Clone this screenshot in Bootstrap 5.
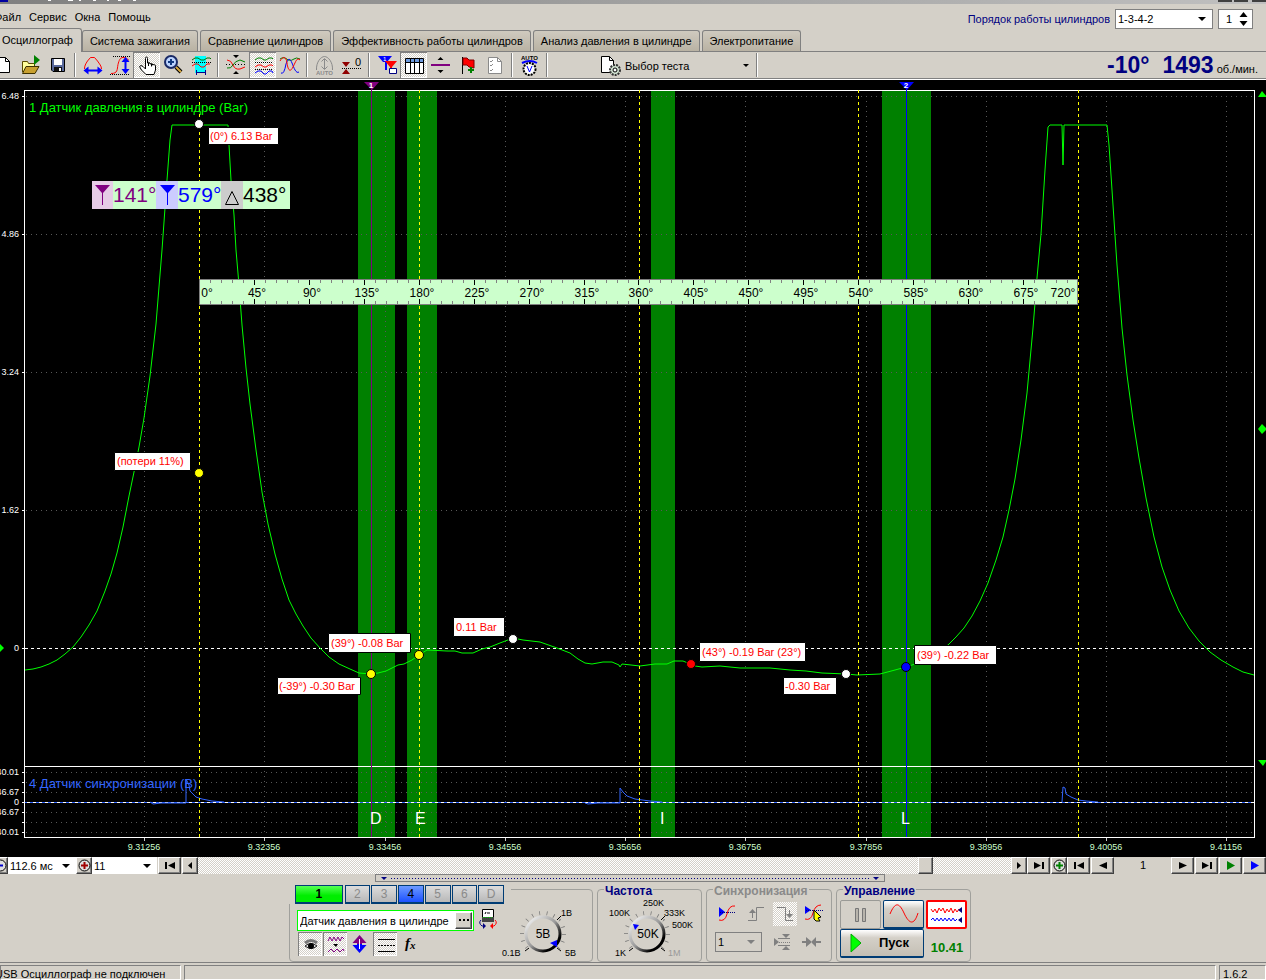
<!DOCTYPE html>
<html lang="ru">
<head>
<meta charset="utf-8">
<meta name="viewport" content="width=device-width, initial-scale=1">
<title>USB Осциллограф</title>
<link rel="stylesheet" href="https://cdn.jsdelivr.net/npm/bootstrap@5.3.0/dist/css/bootstrap.min.css">
<style>
:root{--face:#d4d0c8;--shade:#808080;--navy:#000080;--edge:#003c74}
body{background:var(--face);color:#000;font:11px/16px "Liberation Sans",Arial,sans-serif;min-height:100vh;overflow-x:hidden}
button,input,select{font:inherit;color:#000;border-radius:0}
svg{display:block}
.checker{background:repeating-conic-gradient(#fff 0 25%,var(--face) 0 50%) 0 0/2px 2px}
.titlebar{height:4px;background:linear-gradient(90deg,#808080,#c0c0c0);overflow:hidden}
.menubar{height:25px}
.menubar nav{margin-left:-6px;gap:8px}
.menubar a{color:#000;text-decoration:none}
.order{color:var(--navy);gap:5px;padding:3px 13px 0 0;height:26px}
.pick{position:relative;background:#fff}
.pick::after{content:"";position:absolute;right:6px;top:50%;margin-top:-2px;border:4px solid transparent;border-top-color:#000;border-bottom:0;pointer-events:none}
.pick select,.field{appearance:none;border:0;background:transparent;width:100%;height:100%;padding:0 2px;outline:0}
.boxed{border:1px solid var(--shade);height:20px}
.order .pick{width:98px}
.spin{width:35px;background:#fff}
.spin input{width:20px;padding:0 0 0 7px}
.spin button{border:0;background:none;padding:0;display:block}
.tabs{height:23px;border-bottom:1px solid var(--shade);gap:2px}
.tabs button{height:21px;border:1px solid var(--shade);border-bottom:0;border-radius:3px 3px 0 0;background:linear-gradient(#cfcabf,#b9b2a3);padding:0 7px;white-space:nowrap}
.tabs button.active{height:24px;margin-bottom:-1px;margin-right:-2px;background:var(--face);border-left:0;padding:0 8px 2px 2px;border-radius:0 3px 0 0}
.toolbar{height:28px;border-bottom:1px solid #fff;box-shadow:inset 0 -1px var(--shade)}
.tools{margin-left:-10px}
.tb{width:27px;height:26px;border:0;background:none;padding:0;flex:none}
.tb.on{box-shadow:inset 1px 1px var(--shade),inset -1px -1px #fff}
.tb.on.checker,.mini.checker{background:repeating-conic-gradient(#fff 0 25%,var(--face) 0 50%) 0 0/2px 2px}
.sep{width:2px;height:24px;margin:1px 3px;background:linear-gradient(90deg,var(--shade) 50%,#fff 50%);flex:none}
.testpick{width:156px;margin-left:46px;border:0;background:none;padding:0 4px 0 0}
.caret{border:3px solid transparent;border-top-color:#000;border-bottom:0}
.rpm{color:var(--navy);font-weight:700;font-size:23px;line-height:26px;padding-right:8px}
.rpm span:first-child{margin-right:13px}
.rpm small{font-weight:400;font-size:11px;color:#000;margin-left:3px}
.plot{background:#000;width:100%;height:auto}
.plot text{font-family:"Liberation Sans",Arial,sans-serif}
.strip{height:17px}
.strip .pick{width:68px}
.strip .pick.n{width:65px;margin-right:1px}
.rb{border:1px solid;border-color:#fff #404040 #404040 #fff;box-shadow:inset -1px -1px var(--shade);background:var(--face);padding:0;width:23px;margin-right:1px;flex:none;display:flex;align-items:center;justify-content:center}
.rb.s{width:16px;margin-right:0}
.rb.cut{margin-left:-8px}
.rb.thumb{width:15px;margin-right:78px}
.page{width:56px}
.lower{padding-right:6px}
.grip{width:510px;height:8px;border:1px solid var(--shade);padding:0 5px}
.grip i{border:3px solid transparent;border-top-color:var(--navy);border-bottom:0}
.grip span{height:1px;background:repeating-linear-gradient(90deg,var(--navy) 0 1px,transparent 1px 3px)}
.panels{gap:4px;padding-top:7px;height:80px}
.grp{position:relative;border:1px solid #a0a09c;border-radius:4px;height:73px}
.grp h2{position:absolute;top:-5px;left:6px;margin:0;padding:0 1px;background:var(--face);font-size:12px;font-weight:700;line-height:12px;color:var(--navy)}
.grp h2.dim{color:#8a8a8a}
.g-chan{width:304px}.g-freq{width:105px}.g-sync{width:126px}.g-ctl{width:135px;padding:10px 0 0 3px}
.chan{margin:-5px 0 0 -1px;background:var(--face);padding:0 6px;width:222px}
.chan button{height:19px;width:26px;margin-right:1px;border:1px solid var(--edge);border-width:1px 1px 2px;background:linear-gradient(#dcdcdc,#b8b8b8);color:#8a8a8a;padding:0;line-height:14px;font-size:12px}
.chan .c1{width:48px;margin-right:2px;background:linear-gradient(#5f5,#0e0 60%);color:#000;font-weight:700}
.chan .c4{background:linear-gradient(#6c9aff,#1c50ff);color:#000}
.sensor{width:177px;height:21px;border:1px solid #0f0;background:#fff;margin:6px 4px 0 7px}
.sensor .rb{width:17px;height:17px;margin:1px}
.mini{width:24px;height:24px;border:0;background:none;padding:0;margin-right:1px}
.mini.on{box-shadow:inset 1px 1px var(--shade),inset -1px -1px #fff}
.viewrow{margin-top:1px;padding-left:8px}
.knob{margin-left:-11px}
.src{width:47px;background:transparent}
.src::after{border-top-color:#808080}
.xp{border:1px solid var(--edge);border-width:1px 1px 2px;border-radius:2px;background:linear-gradient(#fff,#d4d0c8 30%,#c4bfb4);padding:0;width:41px;height:29px;flex:none}
.xp.off{border:1px solid #9a9a96;background:var(--face)}
.xp.hot{border:2px solid #f00;background:#fff}
.xp.go{width:84px;font-size:13px;font-weight:700}
.pair{gap:2px}
.val{color:#008000;font-weight:700;font-size:13px;width:50px}
.status{height:18px;border-top:1px solid var(--shade);padding-top:2px;gap:3px;line-height:16px;overflow:hidden}
.status div{border:1px solid;border-color:var(--shade) #fff #fff var(--shade);white-space:nowrap}
.status .a{width:181px;text-indent:-6px}
.status .c{width:47px;padding-left:3px}
</style>
</head>
<body class="d-flex flex-column">
<div class="titlebar"><svg width="100%" height="4" shape-rendering="crispEdges"><rect width="8" height="2" fill="#0000a0"/><path d="M48 0h3M68 0h5M79 0h2M93 0h3M107 0h2M118 0h3M133 0h3" stroke="#fff" stroke-width="2"/><svg x="100%" width="1" height="4" overflow="visible"><path d="M-48 0h14v2h-14zM-32 0h14v2h-14zM-14 0h14v2h-14z" fill="#404040"/></svg></svg></div>

<header class="menubar d-flex justify-content-between">
  <nav class="d-flex align-items-center"><a href="#">Файл</a><a href="#">Сервис</a><a href="#">Окна</a><a href="#">Помощь</a></nav>
  <div class="order d-flex align-items-center">
    <label for="order">Порядок работы цилиндров</label>
    <div class="pick boxed"><select id="order"><option>1-3-4-2</option></select></div>
    <div class="spin boxed d-flex"><input class="field" value="1" aria-label="Цилиндр">
      <div class="d-flex flex-column justify-content-center"><button aria-label="Больше"><svg width="9" height="8"><path d="M4.500 1 8.500 6H.5z"/></svg></button><button aria-label="Меньше"><svg width="9" height="8"><path d="M4.500 7 8.500 2H.5z"/></svg></button></div>
    </div>
  </div>
</header>

<div class="tabs d-flex align-items-end" role="tablist">
  <button class="active" role="tab">Осциллограф</button><button role="tab">Система зажигания</button><button role="tab">Сравнение цилиндров</button><button role="tab">Эффективность работы цилиндров</button><button role="tab">Анализ давления в цилиндре</button><button role="tab">Электропитание</button>
</div>

<div class="toolbar d-flex">
  <div class="tools d-flex">
    <button class="tb" aria-label="Новый"><svg width="27" height="26"><path d="M6.500 5.500h9l4 4v11h-13z" fill="#fff" stroke="#000"/><path d="M15.500 5.500v4h4" fill="none" stroke="#000"/></svg></button>
    <button class="tb" aria-label="Открыть"><svg width="27" height="26"><path d="M5.500 20V9.500h5l1 2h6V14" fill="#ffff9c" stroke="#5a4a00"/><path d="M5.500 21.500 9 14.500h13L18 21.500z" fill="#c8a030" stroke="#3c3000"/><path d="M17 3v10l6-5z" fill="#008000"/></svg></button>
    <button class="tb" aria-label="Сохранить"><svg width="27" height="26"><path d="M7.500 6.500h13v13H9l-1.500-1.500z" fill="#5a6a9c" stroke="#000"/><path d="M10 7h8v6h-8z" fill="#fff"/><path d="M10 15h8v4h-8z" fill="#111"/><path d="M15 16h2v3h-2z" fill="#fff"/></svg></button>
    <span class="sep"></span>
    <button class="tb" aria-label="Период"><svg width="27" height="26"><path d="M5.500 17c0-3 1-5 3-8l3-3.500h4l3 3.500c2 3 4 5 4 8" fill="none" stroke="#f00"/><path d="M8 18.500h12" stroke="#00f" stroke-width="2"/><path d="M4.500 18.500l5-4v8zM23.500 18.500l-5-4v8z" fill="#00f"/></svg></button>
    <button class="tb" aria-label="Амплитуда"><svg width="27" height="26"><path d="M7 4.500h17M4 22.500h20" stroke="#000" stroke-dasharray="1 1" shape-rendering="crispEdges"/><path d="M5 21.500c7 0 6-4 7-9 1-4 2-7 5-7 3 0 4 1 6 3" fill="none" stroke="#f00"/><path d="M19.500 8v12" stroke="#00f" stroke-width="2"/><path d="M19.500 5l-4 5h8zM19.500 22l-4-5h8z" fill="#00f"/></svg></button>
    <button class="tb on checker" aria-label="Рука"><svg width="27" height="26"><path d="M12.500 15V6.500q0-1.500 1-1.500t1 1.500V11l1-.5 1.500.5v1l1.500-.500 1 .5v1l1.500-.5 1.500 1V18l-1.500 4.500h-8L8.500 18l-2-3.500 1.500-1 2 1 2.500 2.500z" fill="#fff" stroke="#000"/><path d="M15.500 11v3M18.500 12v2.500" stroke="#000"/></svg></button>
    <button class="tb" aria-label="Лупа"><svg width="27" height="26"><path d="M16 15l5 5" stroke="#000" stroke-width="4"/><path d="M16 15l5 5" stroke="#d8a840" stroke-width="2"/><circle cx="11" cy="10" r="6" fill="#bcd4ff" stroke="#1a2a66" stroke-width="2"/><path d="M8 10h6M11 7v6" stroke="#123a80" stroke-width="2"/></svg></button>
    <button class="tb" aria-label="Участок"><svg width="27" height="26"><path d="M8 4h11v17H8z" fill="#0ff"/><path d="M5 8l3-2h3l3 2h3l3-2h3l1 1" fill="none" stroke="#007000"/><path d="M5 10.500h19" stroke="#000" stroke-dasharray="1 1" shape-rendering="crispEdges"/><path d="M5 14l3-2h3l3 3h3l3-3h3" fill="none" stroke="#f00"/><path d="M9.500 18v5M18.500 18v5M10 20.500h8" stroke="#00008b"/></svg></button>
    <span class="sep"></span>
    <button class="tb" aria-label="Совместить"><svg width="27" height="26"><path d="M11 3h6l-3 3zM11 22h6l-3-3z"/><path d="M4 12.500h20" stroke="#000" stroke-dasharray="1 2" shape-rendering="crispEdges"/><path d="M5 8q4 0 6 5t7 4l5-2" fill="none" stroke="#f00"/><path d="M5 16q4 1 6-3t7-5l5 2" fill="none" stroke="#008000"/></svg></button>
    <button class="tb on checker" aria-label="Разнести"><svg width="27" height="26"><g fill="none"><path d="M6 8l3-2h3l3 2h2l3-2h3l1 1" stroke="#008000"/><path d="M6 15l3-2h3l3 2h2l3-2h3l1 1" stroke="#f00"/><path d="M6 21l3-2h3l3 3h2l3-3h3l1 2" stroke="#00f"/><path d="M6 10.500h18M6 17.500h18" stroke="#000" stroke-dasharray="1 1" shape-rendering="crispEdges"/></g></svg></button>
    <button class="tb" aria-label="Наложить"><svg width="27" height="26"><g fill="none"><path d="M4 7q4-3 8 1 4 1 6-1t6 0" stroke="#008000"/><path d="M5 21q3 2 5-9c2-6 4-6 6-1s4 11 7 9" stroke="#00f"/><path d="M4 9c3-5 6-5 7 2s3 10 6 4 4-10 7-7" stroke="#f00"/></g></svg></button>
    <span class="sep"></span>
    <button class="tb" aria-label="Авто"><svg width="27" height="26"><path d="M5.500 18C5 10 10 4.500 13.500 4.500S22 10 21.500 18M13.500 7v10M10.500 9.500l3-3 3 3M10.500 14.500l3 3 3-3" fill="none" stroke="#8a8a8a"/><text x="5" y="23" font-size="6" font-weight="700" fill="#8a8a8a">AUTO</text></svg></button>
    <button class="tb" aria-label="Ноль"><svg width="27" height="26"><path d="M4 10h8l-4 5zM4 22h8l-4-5z" fill="#900000"/><path d="M4 16.500h20" stroke="#000" stroke-dasharray="1 1" shape-rendering="crispEdges"/><text x="17" y="14" font-size="11">0</text></svg></button>
    <span class="sep"></span>
    <button class="tb" aria-label="Маркеры"><svg width="27" height="26"><path d="M5 4h14l-5 6v8h-2v-8h-2z" fill="#00f"/><path d="M12 9h12l-5 6v4h-2v-4z" fill="#f00"/><text x="10" y="9" font-size="6" fill="#fff">1</text><path d="M16.500 16.500h7v5h-7z" fill="#fff" stroke="#000080"/></svg></button>
    <button class="tb on checker" aria-label="Таблица"><svg width="27" height="26"><path d="M5.500 6.500h18v15h-18z" fill="#fff" stroke="#000"/><path d="M6 7h17v3H6z" fill="#6d9be0"/><path d="M10.500 7v14M14.500 7v14M19.500 7v14M6 10.500h17" stroke="#000"/></svg></button>
    <button class="tb" aria-label="Разделить"><svg width="27" height="26"><path d="M13.500 5l3 3h-6zM13.500 21l3-3h-6z"/><path d="M4 13h19" stroke="#800080" stroke-width="2"/></svg></button>
    <button class="tb" aria-label="Флаг"><svg width="27" height="26"><path d="M8.500 5v17" stroke="#000"/><path d="M9 6h4l2 2h5v8l-5-1-2-2H9z" fill="#f00" stroke="#800000"/><path d="M17 15v6M14 18h6" stroke="#008000" stroke-width="2"/></svg></button>
    <button class="tb" aria-label="Отчёт"><svg width="27" height="26"><path d="M7.500 5.500h9l4 4v12h-13z" fill="#fff" stroke="#8a8a8a"/><path d="M16.500 5.500v4h4M9 9l1 1 2-2M9 13l1 1 2-2M9 18l1 1 2-2" fill="none" stroke="#8a8a8a"/></svg></button>
    <span class="sep"></span>
    <button class="tb" aria-label="Автонастройка"><svg width="27" height="26"><text x="5" y="8" font-size="6" font-weight="700">AUTO</text><path d="M6 11q8-4 15 0" fill="none" stroke="#00f" stroke-width="2"/><circle cx="13.500" cy="17" r="6" fill="#fff" stroke="#000" stroke-width="2" stroke-dasharray="2 1"/><path d="M11 14l2.500 6 2.500-6" fill="none" stroke="#00f"/></svg></button>
    <span class="sep"></span>
    <button class="testpick d-flex align-items-center"><svg width="24" height="26"><path d="M4.500 3.500h8l4 4v12h-12z" fill="#fff" stroke="#000"/><path d="M12.500 3.500v4h4" fill="none" stroke="#000"/><circle cx="18" cy="17" r="5" fill="#cfe0cf" stroke="#333" stroke-width="2" stroke-dasharray="2 1"/><circle cx="18" cy="17" r="2" fill="#fff" stroke="#000"/></svg><span class="ms-1">Выбор теста</span><i class="caret ms-auto"></i></button>
    <span class="sep"></span>
  </div>
  <div class="rpm ms-auto d-flex align-items-baseline"><span>-10°</span><span>1493</span><small>об./мин.</small></div>
</div>

<svg class="plot" viewBox="0 80 1266 777">
  <g fill="#008000"><path d="M358 91h37v746h-37zM407 91h30v746h-30zM651 91h24v746h-24zM882 91h49v746h-49z"/></g>
  <g id="grid" fill="none" stroke="#585858" shape-rendering="crispEdges"></g>
  <g fill="#fff" shape-rendering="crispEdges"><path d="M24 90h1231v1H24zM24 90h1v748h-1zM1254 90h1v748h-1zM24 837h1231v1H24zM24 766h1231v1H24z"/></g>
  <path d="M25 648.500h1229" stroke="#fff" stroke-dasharray="3 3" shape-rendering="crispEdges"/>
  <polyline fill="none" stroke="#0f0" points="25,670 33,669 41,667 49,664 57,660 65,654 73,647 81,637 89,625 97,611 105,591 111,574 117,553 123,527 129,496 134,472 139,447 144,418 150,376 156,324 162,250 167,180 170,140 172,125 198,125 228,125 229,145 231,180 234,215 236,250 239,285 242,325 246,368 250,404 256,450 262,492 268,524 275,554 282,579 289,600 296,614 303,626 311,638 320,648 329,657 339,664 350,669 359,673 371,674 378,673 386,671 398,665 404,664 412,660 419,655 427,650 447,651 455,651 462,653 473,653 482,649 490,647 500,643 513,638 523,640 540,642 557,648 570,653 578,659 585,663 592,664 603,662 612,662 619,665 620,667 622,664 640,666 655,664 667,664 674,661 683,661 695,666 702,667 720,666 740,668 770,668 790,670 806,671 822,673 846,674 857,675 880,674 895,670 906,667 918,663 930,656 948,645 956,637 964,628 972,616 980,601 988,583 996,560 1003,537 1009,510 1015,479 1021,440 1027,393 1033,328 1037,278 1041,234 1045,170 1048,127 1050,125 1062,125 1063,165 1064,125 1107,125 1109,145 1113,205 1117,265 1122,328 1127,375 1133,420 1139,458 1146,498 1154,537 1162,567 1170,590 1179,611 1189,628 1199,641 1210,652 1221,660 1233,667 1243,672 1254,675"/>
  <path d="M25 802.500h1229" stroke="#36f" shape-rendering="crispEdges"/>
  <path d="M27 802.500h1227" stroke="#fff" stroke-dasharray="3 3" shape-rendering="crispEdges"/>
  <path d="M150 802l3 2 8-1h25v-24l3 6 1 6 3 3 3 3 6 2 10 2 12 1M585 803l3 1 10-1h22v-15l3 4 4 4 8 3 15 2 12 1M1062 802l1-15 2 1 1 6 5 3 7 3 8 1 12 1" fill="none" stroke="#36f"/>
  <g id="events" stroke="#ff0" stroke-dasharray="3 3" shape-rendering="crispEdges"></g>
  <path d="M371 88h1v749h-1z" fill="#800080"/><path d="M906 88h1v749h-1z" fill="#00f"/>
  <path d="M364 82h15l-7 8z" fill="#800080"/><path d="M899 82h15l-7 8z" fill="#00f"/>
  <g fill="#fff" font-size="8" font-weight="700" text-anchor="middle"><text x="371" y="88">1</text><text x="906" y="88">2</text></g>
  <text x="29" y="112" font-size="13" fill="#0f0">1 Датчик давления в цилиндре (Bar)</text>
  <text x="29" y="788" font-size="13" fill="#36f">4 Датчик синхронизации (В)</text>
  <g fill="#fff" font-size="16"><text x="370" y="824">D</text><text x="415" y="824">E</text><text x="660" y="824">I</text><text x="901" y="824">L</text></g>
  <g fill="#fff" font-size="9" text-anchor="end"><text x="19" y="99">6.48</text><text x="19" y="237">4.86</text><text x="19" y="375">3.24</text><text x="19" y="513">1.62</text><text x="19" y="651">0</text><text x="19" y="775">140.01</text><text x="19" y="795">46.67</text><text x="19" y="805">0</text><text x="19" y="815">-46.67</text><text x="19" y="835">-140.01</text></g>
  <g id="times" fill="#cfc" font-size="9" text-anchor="middle"></g>
  <path d="M1258 97l4-6 5 6zM1258 760h9l-4 6zM1262 424l5 5-5 5-4-5zM0 644l4 4-4 4z" fill="#0f0"/>

  <path d="M199.500 279.500h878v25h-878z" fill="#cfc" stroke="#808080"/>
  <g id="ruler" shape-rendering="crispEdges"></g>
  <g id="degrees" font-size="12" text-anchor="middle"></g>

  <path d="M92 181h198v28H92z" fill="#cfc"/><path d="M92 181h21v28H92z" fill="#e6cce6"/><path d="M156 181h22v28h-22z" fill="#ccf"/><path d="M221 181h22v28h-22z" fill="#ccc"/>
  <path d="M95 185h15l-7 8v12h-1v-12z" fill="#800080"/><path d="M160 185h15l-7 8v12h-1v-12z" fill="#00f"/><path d="M232 191.500l6.500 13h-13z" fill="none" stroke="#000"/>
  <g font-size="21"><text x="113" y="202" fill="#800080">141°</text><text x="178" y="202" fill="#00f">579°</text><text x="243" y="202">438°</text></g>

  <path fill="#fff" stroke="#000" d="M208.500 127.500h70v17h-70zM114.500 452.500h76v18h-76zM328.500 633.500h82v19h-82zM277.500 677.500h83v17h-83zM453.500 617.500h51v19h-51zM699.500 642.500h106v19h-106zM783.500 677.500h53v17h-53zM914.500 645.500h82v19h-82z"/>
  <g fill="#f00" font-size="11"><text x="210" y="140">(0°) 6.13 Bar</text><text x="117" y="465">(потери 11%)</text><text x="331" y="647">(39°) -0.08 Bar</text><text x="279" y="690">(-39°) -0.30 Bar</text><text x="456" y="631">0.11 Bar</text><text x="702" y="656">(43°) -0.19 Bar (23°)</text><text x="785" y="690">-0.30 Bar</text><text x="917" y="659">(39°) -0.22 Bar</text></g>
  <g stroke="#000"><g fill="#fff"><circle cx="199" cy="124" r="4.500"/><circle cx="513" cy="639" r="4.500"/><circle cx="846" cy="674" r="4.500"/></g><g fill="#ff0"><circle cx="199" cy="473" r="4.500"/><circle cx="371" cy="674" r="4.500"/><circle cx="419" cy="655" r="4.500"/></g><circle cx="691" cy="664" r="4.500" fill="#f00"/><circle cx="906" cy="667" r="4.500" fill="#00f"/></g>
</svg>

<div class="strip d-flex">
  <button class="rb s cut" aria-label="Уменьшить"><svg width="13" height="13"><circle cx="6.500" cy="6.500" r="5.500" fill="#ddd" stroke="#000"/><path d="M4 6.500h5" stroke="#00c" stroke-width="2"/></svg></button>
  <div class="pick"><select aria-label="Развёртка"><option>112.6 мс</option></select></div>
  <button class="rb s" aria-label="Увеличить"><svg width="13" height="13"><circle cx="6.500" cy="6.500" r="5.500" fill="#ddd" stroke="#000"/><path d="M3 6.500h7M6.500 3v7" stroke="#a00000" stroke-width="2"/></svg></button>
  <div class="pick n"><select aria-label="Масштаб"><option>11</option></select></div>
  <button class="rb" aria-label="В начало"><svg width="12" height="9"><path d="M1 1h2v7H1zM11 1v7L4 4.500z"/></svg></button>
  <button class="rb s" aria-label="Влево"><svg width="6" height="9"><path d="M5 1v7L1 4.500z"/></svg></button>
  <div class="checker flex-grow-1 d-flex justify-content-end"><span class="rb thumb"></span></div>
  <button class="rb s" aria-label="Вправо"><svg width="6" height="9"><path d="M1 1v7l4-3.500z"/></svg></button>
  <button class="rb" aria-label="В конец"><svg width="12" height="9"><path d="M9 1h2v7H9zM1 1v7l7-3.500z"/></svg></button>
  <button class="rb s" aria-label="Добавить"><svg width="13" height="13"><circle cx="6.500" cy="6.500" r="5.500" fill="#ddd" stroke="#000"/><path d="M3 6.500h7M6.500 3v7" stroke="#008000" stroke-width="2"/></svg></button>
  <button class="rb" aria-label="Первый"><svg width="12" height="9"><path d="M1 1h2v7H1zM11 1v7L4 4.500z"/></svg></button>
  <button class="rb" aria-label="Назад"><svg width="10" height="9"><path d="M9 1v7L1 4.500z"/></svg></button>
  <div class="page text-center">1</div>
  <button class="rb" aria-label="Вперёд"><svg width="10" height="9"><path d="M1 1v7l8-3.500z"/></svg></button>
  <button class="rb" aria-label="Последний"><svg width="12" height="9"><path d="M9 1h2v7H9zM1 1v7l7-3.500z"/></svg></button>
  <button class="rb" aria-label="Просмотр"><svg width="10" height="9"><path d="M1 0v9l8-4.500z" fill="#008000"/></svg></button>
  <button class="rb me-0" aria-label="Воспроизвести"><svg width="10" height="9"><path d="M1 0v9l8-4.500z" fill="#00f"/></svg></button>
</div>

<div class="lower">
<div class="grip mx-auto d-flex align-items-center"><i></i><span class="flex-grow-1 mx-1"></span><i></i></div>

<main class="panels d-flex justify-content-center">
  <section class="grp g-chan d-flex">
    <div>
      <div class="chan d-flex"><button class="c1">1</button><button>2</button><button>3</button><button class="c4">4</button><button>5</button><button>6</button><button>D</button></div>
      <div class="d-flex"><div class="sensor d-flex"><input class="field" value="Датчик давления в цилиндре" aria-label="Датчик"><button class="rb" aria-label="Выбрать датчик"><svg width="10" height="3"><path d="M0 0h2v2H0zM4 0h2v2H4zM8 0h2v2H8z"/></svg></button></div>
        <svg width="20" height="22" class="mt-1"><path d="M4.500 1.500h11v10h-11z" fill="#fff" stroke="#000"/><path d="M4 9h12v5H4z" fill="#444"/><path d="M7 6l1-2M9 5h3" stroke="#000"/><path d="M5 9.500h10" stroke="#0c0" stroke-dasharray="1 1"/><path d="M3 12q-3 3 1 6h3" fill="none" stroke="#000080"/><path d="M5 15l3 3-3 3z" fill="#000080"/><path d="M17 12q3 3-1 6h-3" fill="none" stroke="#f00"/><path d="M15 15l-3 3 3 3z" fill="#f00"/></svg></div>
      <div class="viewrow d-flex">
        <button class="mini on checker" aria-label="Видимость"><svg width="24" height="24"><path d="M7 11q6-5 12 0" stroke="#777" stroke-width="3" fill="none"/><path d="M7 14q6-5 12 0-6 5-12 0z" fill="#ddd" stroke="#222"/><circle cx="13" cy="14" r="3"/></svg></button>
        <button class="mini on checker" aria-label="Сглаживание"><svg width="24" height="24"><path d="M5 9l2-4 2 4 2-4 2 4 2-4 2 4 2-4 2 2" fill="none" stroke="#800080"/><path d="M10 12h5l-2 3z"/><path d="M5 20l3-3 3 3 3-3 3 3 3-3 1 2" fill="none" stroke="#800080"/></svg></button>
        <button class="mini" aria-label="Инверсия"><svg width="24" height="24"><path d="M11.500 3l7 8H14v1H9v-1H4.500z" fill="#800080"/><path d="M11.500 21l7-8H14v-1H9v1H4.500z" fill="#00f"/><path d="M11.500 7v10" stroke="#fff"/></svg></button>
        <button class="mini on checker" aria-label="Линии"><svg width="24" height="24"><path d="M5 7.500h17M5 19.500h17" stroke="#000"/><path d="M5 13.500h17" stroke="#000" stroke-dasharray="2 1"/></svg></button>
        <button class="mini" aria-label="Функция"><svg width="24" height="24"><text x="7" y="16" font-family="Liberation Serif" font-size="15" font-style="italic" font-weight="700">f</text><text x="12" y="17" font-family="Liberation Serif" font-size="11" font-style="italic" font-weight="700">x</text></svg></button>
      </div>
    </div>
    <svg class="knob" width="90" height="70" viewBox="500 890 90 70"><use href="#dial" x="543" y="934"/><path d="M550 943l7-3v7z" fill="#00f"/><g font-size="9"><text x="561" y="916">1В</text><text x="502" y="956">0.1В</text><text x="565" y="956">5В</text></g><text x="543" y="938" font-size="12" text-anchor="middle">5В</text></svg>
  </section>

  <section class="grp g-freq"><h2>Частота</h2>
    <svg width="103" height="70" viewBox="598 890 103 70">
      <defs><linearGradient id="rim" x1="0" y1="0" x2="1" y2="1"><stop offset="0" stop-color="#fff"/><stop offset=".5" stop-color="#999"/><stop offset=".8" stop-color="#000"/></linearGradient>
      <g id="dial"><circle r="21" fill="none" stroke="#777" stroke-width="4" pathLength="360" stroke-dasharray="2 18" transform="rotate(140)"/><path d="M0 0-26 28H26z" fill="#d4d0c8"/><circle r="17" fill="#d4d0c8" stroke="url(#rim)" stroke-width="3"/><path d="M-14 14l-4 3M14 14l4 3M14-14l4-4" stroke="#000"/></g></defs>
      <use href="#dial" x="647" y="934"/><path d="M633 924l6 1-4 5z" fill="#00f"/>
      <g font-size="9"><text x="609" y="916">100K</text><text x="643" y="906">250K</text><text x="664" y="916">333K</text><text x="672" y="928">500K</text><text x="615" y="956">1K</text><text x="668" y="956" fill="#999">1M</text></g><text x="648" y="938" font-size="12" text-anchor="middle">50K</text>
    </svg></section>

  <section class="grp g-sync pt-2 ps-2"><h2 class="dim">Синхронизация</h2>
    <div class="d-flex gap-1 pt-1">
      <button class="mini" aria-label="Уровень"><svg width="24" height="24"><path d="M4 5l6 5-6 5z" fill="#00f"/><path d="M5 10.500h16" stroke="#000080" stroke-dasharray="1 1"/><path d="M4 18q6 2 8-6 2-9 8-8" fill="none" stroke="#f00"/></svg></button>
      <button class="mini" aria-label="По фронту"><svg width="24" height="24"><path d="M4 18.500h8.500v-13H20M8.500 16V9" fill="none" stroke="#808080"/><path d="M5 11h7l-3.500-4z" fill="#808080"/></svg></button>
      <button class="mini checker" aria-label="По спаду"><svg width="24" height="24"><path d="M4 5.500h8.500v13H20M16.500 8v6" fill="none" stroke="#808080"/><path d="M13 12h7l-3.500 4z" fill="#808080"/></svg></button>
      <button class="mini" aria-label="Указать"><svg width="24" height="24"><path d="M3 4l6 4-6 4z" fill="#00f"/><path d="M4 8.500h17" stroke="#000080" stroke-dasharray="1 1"/><path d="M3 17q6 2 8-6 2-8 8-8" fill="none" stroke="#f00"/><path d="M12 8l7 7-3 1 2 3h-4l-2-2z" fill="#ff0" stroke="#000"/></svg></button>
    </div>
    <div class="d-flex align-items-center gap-1 mt-1">
      <div class="pick src boxed me-1"><select aria-label="Канал синхронизации"><option>1</option></select></div>
      <button class="mini" aria-label="Зона"><svg width="24" height="24"><path d="M4 8l5 4-5 4zM12 4h8l-4 4zM12 20h8l-4-4z" fill="#808080"/><path d="M8 8.500h12M8 15.500h12" stroke="#808080"/><path d="M9 12.500h11" stroke="#808080" stroke-dasharray="1 1"/></svg></button>
      <button class="mini" aria-label="Центр"><svg width="24" height="24"><path d="M7 7l6 5-6 5v-4H3v-2h4zM17 7l-5 5 5 5v-4h5v-2h-5z" fill="#808080"/></svg></button>
    </div></section>

  <section class="grp g-ctl"><h2>Управление</h2>
    <div class="pair d-flex">
      <button class="xp off" aria-label="Пауза"><svg class="mx-auto" width="14" height="16"><path d="M1.500 1.500h3v13h-3zM8.500 1.500h3v13h-3z" fill="#b8b4ac" stroke="#777"/></svg></button>
      <button class="xp" aria-label="Однократно"><svg class="mx-auto" width="32" height="22"><path d="M2 11C7-1 11-1 16 10s10 13 14 0" fill="none" stroke="#f00"/></svg></button>
      <button class="xp hot" aria-label="Непрерывно"><svg class="mx-auto" width="35" height="22"><path d="M2 5l2 3 2-3 2 4 2-5 2 3 2-3 2 5 2-4 2 3 2-4 2 5 2-4 2 3 2-3" fill="none" stroke="#f00"/><path d="M2 16l2-2 2 3 2-3 2 3 2-3 2 3 2-3 2 3 2-3 2 3 2-3 2 3 2-2" fill="none" stroke="#00f"/><path d="M33 3v6l-4-3zM33 13v6l-4-3z" fill="#000080"/></svg></button>
    </div>
    <div class="d-flex align-items-center">
      <button class="xp go d-flex align-items-center"><svg width="30" height="20"><path d="M10 1v18l10-9z" fill="#0f0" stroke="#0a0"/></svg><span class="ms-2">Пуск</span></button>
      <span class="val text-center pt-2">10.41</span>
    </div></section>
</main>
</div>

<footer class="status d-flex"><div class="a">USB Осциллограф не подключен</div><div class="flex-grow-1"></div><div class="c">1.6.2</div></footer>

<script>
const NS = "http://www.w3.org/2000/svg";
function add(parent, tag, attrs, text) {
  const el = document.createElementNS(NS, tag);
  for (const k in attrs) el.setAttribute(k, attrs[k]);
  if (text) el.textContent = text;
  document.getElementById(parent).append(el);
}
// dotted grid, time axis
for (const y of [96, 234, 372, 510, 772, 782, 792, 812, 822, 832])
  add("grid", "path", {d: `M26 ${y + .5}h1228`, "stroke-dasharray": "1 4"});
for (const y of [96, 234, 372, 510, 648, 772, 782, 792, 802, 812, 822, 832])
  add("grid", "path", {d: `M22 ${y + .5}h2`, stroke: "#fff"});
for (let i = 0; i < 10; i++) {
  const x = Math.round(144 + i * 120.25);
  add("grid", "path", {d: `M${x + .5} 96v740`, "stroke-dasharray": "1 4"});
  add("grid", "path", {d: `M${x + .5} 838v3`, stroke: "#ccc"});
  add("times", "text", {x, y: 850}, (9.31256 + i * .011).toFixed(5));
}
for (const x of [199, 419, 639, 858, 1078]) add("events", "path", {d: `M${x + .5} 90v747`});
// crank angle ruler, 0..720 degrees
for (let a = 9; a < 720; a += 9) {
  const x = Math.round(199 + a * 1.2208) + .5, big = a % 45 === 0, h = big ? 5 : 3;
  add("ruler", "path", {d: `M${x} 280v${h}M${x} ${304 - h}v${h}`, stroke: big ? "#000" : "#808080"});
}
for (let a = 0; a <= 720; a += 45)
  add("degrees", "text", {x: a === 0 ? 207 : a === 720 ? 1063 : Math.round(202 + a * 1.2208), y: 297}, a + "°");
</script>
<script src="https://cdn.jsdelivr.net/npm/bootstrap@5.3.0/dist/js/bootstrap.bundle.min.js"></script>
</body>
</html>
